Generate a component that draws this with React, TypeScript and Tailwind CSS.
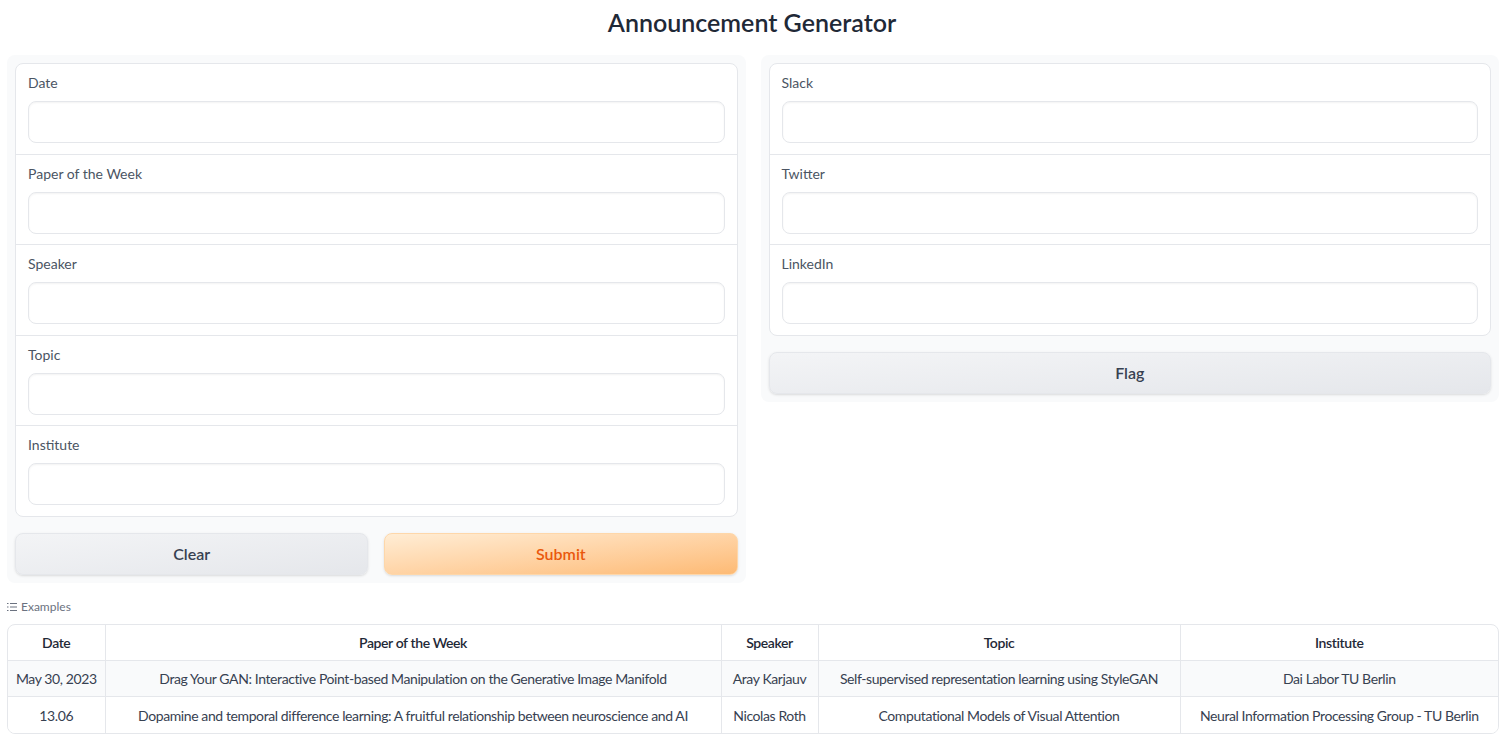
import React from "react";

const font = { fontFamily: '"Source Sans Pro", Lato, "Noto Sans", sans-serif' };

function Field({ label, last }: { label: string; last?: boolean }) {
  return (
    <div className={`px-3 pt-[9px] pb-[10.6px] ${last ? "" : "border-b border-[#e5e7eb]"}`}>
      <div className="text-[14px] leading-[20px] text-[#4b5563] mb-[8px]">{label}</div>
      <div className="h-[42px] rounded-lg border border-[#e5e7eb] bg-white shadow-[inset_0_1px_2px_rgba(0,0,0,0.05)]" />
    </div>
  );
}

const rows = [
  ["May 30, 2023", "Drag Your GAN: Interactive Point-based Manipulation on the Generative Image Manifold", "Aray Karjauv", "Self-supervised representation learning using StyleGAN", "Dai Labor TU Berlin"],
  ["13.06", "Dopamine and temporal difference learning: A fruitful relationship between neuroscience and AI", "Nicolas Roth", "Computational Models of Visual Attention", "Neural Information Processing Group - TU Berlin"],
];

export default function App() {
  return (
    <div className="w-[1504px] h-[736px] bg-white text-[#1f2937] overflow-hidden" style={font}>
      <div className="h-[55px] flex items-center justify-center pb-[10px]">
        <h1 className="text-[25px] font-semibold text-[#1f2937]">Announcement Generator</h1>
      </div>
      <div className="pl-[7px] pr-[5px] flex gap-[15px] items-start">
        <div className="flex-1 bg-[#f9fafb] rounded-lg p-[8px] flex flex-col gap-[16px]">
          <div className="bg-white border border-[#e5e7eb] rounded-lg">
            <Field label="Date" />
            <Field label="Paper of the Week" />
            <Field label="Speaker" />
            <Field label="Topic" />
            <Field label="Institute" last />
          </div>
          <div className="flex gap-[16px]">
            <button className="flex-1 h-[42px] rounded-lg border border-[#e5e7eb] bg-gradient-to-br from-[#f3f4f6] to-[#e5e7eb] text-[16px] font-semibold text-[#374151] shadow-sm">Clear</button>
            <button className="flex-1 h-[42px] rounded-lg border border-[#fed7aa] bg-gradient-to-br from-[#ffedd5] to-[#fdba74] text-[16px] font-semibold text-[#ea580c] shadow-sm">Submit</button>
          </div>
        </div>
        <div className="flex-1 bg-[#f9fafb] rounded-lg p-[8px] flex flex-col gap-[16px]">
          <div className="bg-white border border-[#e5e7eb] rounded-lg">
            <Field label="Slack" />
            <Field label="Twitter" />
            <Field label="LinkedIn" last />
          </div>
          <button className="h-[42px] rounded-lg border border-[#e5e7eb] bg-gradient-to-br from-[#f3f4f6] to-[#e5e7eb] text-[16px] font-semibold text-[#374151] shadow-sm">Flag</button>
        </div>
      </div>
      <div className="pl-[7px] pr-[5px] mt-[15px]">
        <div className="flex items-center gap-[4px] text-[12px] text-[#6b7280] h-[18px] mb-[8px]">
          <svg width="10" height="10" viewBox="0 0 10 10" fill="none" stroke="#6b7280" strokeWidth="1">
            <line x1="0" y1="1.5" x2="1.5" y2="1.5" />
            <line x1="3" y1="1.5" x2="10" y2="1.5" />
            <line x1="0" y1="5" x2="1.5" y2="5" />
            <line x1="3" y1="5" x2="10" y2="5" />
            <line x1="0" y1="8.5" x2="1.5" y2="8.5" />
            <line x1="3" y1="8.5" x2="10" y2="8.5" />
          </svg>
          <span>Examples</span>
        </div>
        <div className="border border-[#e5e7eb] rounded-lg overflow-hidden">
          <table className="w-full table-fixed border-collapse text-[14px] text-[#374151] tracking-[-0.4px]">
            <colgroup>
              <col className="w-[97px]" />
              <col className="w-[616px]" />
              <col className="w-[97px]" />
              <col className="w-[362px]" />
              <col />
            </colgroup>
            <thead>
              <tr className="h-[36px]">
                {["Date", "Paper of the Week", "Speaker", "Topic", "Institute"].map((h, i) => (
                  <th key={h} className={`font-semibold text-[#1f2937] text-center ${i > 0 ? "border-l border-[#e5e7eb]" : ""}`}>{h}</th>
                ))}
              </tr>
            </thead>
            <tbody>
              {rows.map((r, ri) => (
                <tr key={ri} className={`h-[36px] border-t border-[#e5e7eb] ${ri === 0 ? "bg-[#f9fafb]" : "bg-white"}`}>
                  {r.map((c, i) => (
                    <td key={i} className={`text-center whitespace-nowrap ${i > 0 ? "border-l border-[#e5e7eb]" : ""}`}>{c}</td>
                  ))}
                </tr>
              ))}
            </tbody>
          </table>
        </div>
      </div>
    </div>
  );
}
